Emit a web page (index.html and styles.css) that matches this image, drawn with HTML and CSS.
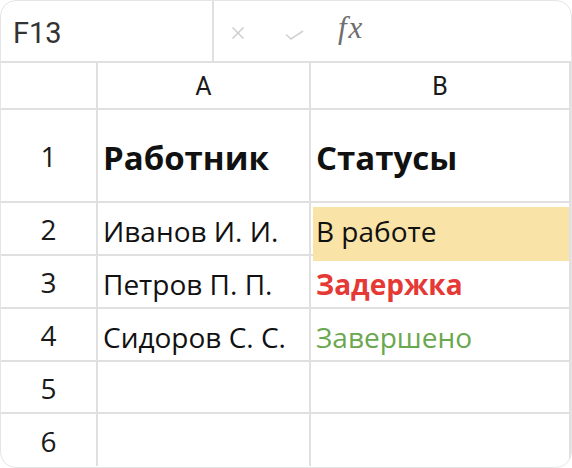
FILE: index.html
```html
<!DOCTYPE html>
<html lang="ru">
<head>
    <meta charset="UTF-8">
    <meta name="viewport" content="width=device-width, initial-scale=1.0">
    <title>Таблица статусов</title>
    <link rel="stylesheet" href="styles.css">
</head>
<body>
    <div class="sheet">
        <div class="formula-bar">
            <div class="name-box">F13</div>
            <div class="formula-actions">
                <svg class="icon-cancel" width="14" height="14" viewBox="0 0 14 14">
                    <path d="M1.5 1.5 L12.5 12.5 M12.5 1.5 L1.5 12.5" stroke="#cfcfcf" stroke-width="1.6" fill="none"/>
                </svg>
                <svg class="icon-ok" width="19" height="10" viewBox="0 0 19 10">
                    <path d="M1 4.5 L6 9 L18 1" stroke="#d2d2d2" stroke-width="1.6" fill="none"/>
                </svg>
                <span class="fx">fx</span>
            </div>
        </div>

        <div class="grid">
            <div class="corner"></div>
            <div class="col-head">A</div>
            <div class="col-head">B</div>

            <div class="row-head tall">1</div>
            <div class="cell tall title">Работник</div>
            <div class="cell tall title">Статусы</div>

            <div class="row-head">2</div>
            <div class="cell">Иванов И. И.</div>
            <div class="cell marked"><span class="fill"></span><span class="txt">В работе</span></div>

            <div class="row-head">3</div>
            <div class="cell">Петров П. П.</div>
            <div class="cell late">Задержка</div>

            <div class="row-head">4</div>
            <div class="cell">Сидоров С. С.</div>
            <div class="cell done">Завершено</div>

            <div class="row-head">5</div>
            <div class="cell"></div>
            <div class="cell"></div>

            <div class="row-head last">6</div>
            <div class="cell last"></div>
            <div class="cell last"></div>
        </div>
    </div>
</body>
</html>
```

FILE: styles.css
```css
* {
    box-sizing: border-box;
    margin: 0;
    padding: 0;
}
body {
    background-color: #fff;
    font-family: "Open Sans", "Noto Sans", sans-serif;
    color: #111;
}
.sheet {
    width: 572px;
    height: 468px;
    border: 1px solid #e4e6e6;
    border-radius: 16px;
    overflow: hidden;
    background: #fff;
}
.formula-bar {
    display: flex;
    height: 62px;
    border-bottom: 2px solid #e0e0e0;
}
.name-box {
    width: 213px;
    border-right: 2px solid #e0e0e0;
    display: flex;
    align-items: center;
    padding-left: 12px;
    padding-top: 4px;
    font-family: Roboto, "Liberation Sans", sans-serif;
    font-size: 29px;
    color: #333;
}
.formula-actions {
    display: flex;
    align-items: center;
    padding-top: 4px;
}
.icon-cancel { margin-left: 17px; }
.icon-ok { margin-left: 40px; margin-top: 4px; }
.fx {
    margin-left: 34px;
    margin-top: -10px;
    font-family: "Liberation Serif", serif;
    font-style: italic;
    font-size: 31px;
    letter-spacing: 2px;
    color: #6e6e6e;
}
.grid {
    display: grid;
    grid-template-columns: 97px 213px 1fr;
    grid-template-rows: 47px 93px 53px 53px 53px 52px 52px;
}
.grid > div {
    border-right: 2px solid #e0e0e0;
    border-bottom: 2px solid #e0e0e0;
    display: flex;
    align-items: center;
}
.grid > .last { border-bottom: none; }
.col-head {
    justify-content: center;
    font-family: Roboto, "Liberation Sans", sans-serif;
    font-size: 25px;
    color: #1a1a1a;
    padding-top: 2px;
}
.row-head {
    justify-content: center;
    font-size: 28px;
    color: #1a1a1a;
    padding-top: 1px;
}
.cell {
    padding-left: 5px;
    padding-top: 5px;
    font-size: 28px;
    position: relative;
}
.cell.title {
    font-weight: 700;
    font-size: 33px;
    padding-top: 4px;
}
.marked .fill {
    position: absolute;
    left: 2px;
    right: 0;
    top: 4px;
    bottom: -7px;
    background: #f9e3a6;
}
.marked .txt {
    position: relative;
}
.late {
    color: #e53935;
    font-weight: 700;
}
.done {
    color: #6aa84f;
}
```
